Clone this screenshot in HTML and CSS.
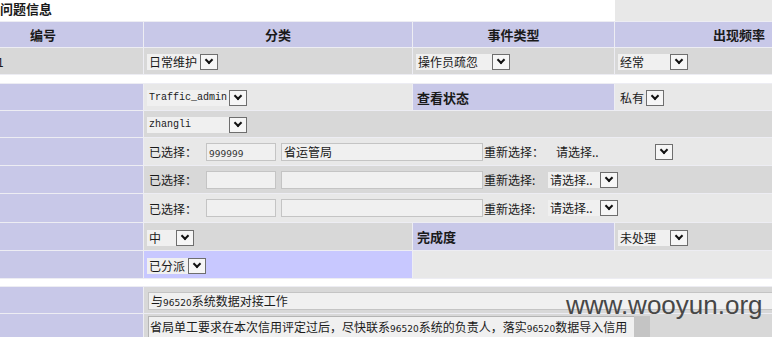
FILE: index.html
```html
<!DOCTYPE html>
<html lang="zh-CN">
<head>
    <meta charset="UTF-8">
    <title>问题信息</title>
    <link rel="stylesheet" href="styles.css">
</head>
<body>
<div class="page">
    <div class="title-bar">
        <div class="title">问题信息</div>
        <div class="title-side"></div>
    </div>

    <table class="grid">
        <colgroup><col class="c1"><col class="c2"><col class="c3"><col class="c4"></colgroup>
        <tr class="h25">
            <th class="lav">编号</th>
            <th class="lav">分类</th>
            <th class="lav">事件类型</th>
            <th class="lav">出现频率</th>
        </tr>
        <tr class="h26">
            <td class="g1 id">1</td>
            <td class="g1"><span class="sel"><span class="val w53">日常维护</span><span class="btn"></span></span></td>
            <td class="g1"><span class="sel"><span class="val w76">操作员疏忽</span><span class="btn"></span></span></td>
            <td class="g1"><span class="sel"><span class="val w52">经常</span><span class="btn"></span></span></td>
        </tr>
    </table>

    <table class="grid second">
        <colgroup><col class="c1"><col class="c2"><col class="c3"><col class="c4"></colgroup>
        <tr class="h26">
            <td class="lav"></td>
            <td class="g2"><span class="sel"><span class="val mono w82">Traffic_admin</span><span class="btn"></span></span></td>
            <td class="lav strong">查看状态</td>
            <td class="g2"><span class="sel"><span class="val w28 flat">私有</span><span class="btn"></span></span></td>
        </tr>
        <tr class="h26">
            <td class="lav"></td>
            <td class="g1" colspan="3"><span class="sel"><span class="val mono w82">zhangli</span><span class="btn"></span></span></td>
        </tr>
        <tr class="h27">
            <td class="lav"></td>
            <td class="g2" colspan="3">
                <div class="pick">
                    <span class="lbl">已选择：</span>
                    <span class="field code"><span class="small">999999</span></span>
                    <span class="field name">省运管局</span>
                    <span class="lbl2 wide">重新选择：</span>
                    <span class="sel"><span class="val w101 flat">请选择..</span><span class="btn"></span></span>
                </div>
            </td>
        </tr>
        <tr class="h27">
            <td class="lav"></td>
            <td class="g1" colspan="3">
                <div class="pick">
                    <span class="lbl">已选择：</span>
                    <span class="field code"></span>
                    <span class="field name"></span>
                    <span class="lbl2">重新选择:</span>
                    <span class="sel"><span class="val w52">请选择..</span><span class="btn"></span></span>
                </div>
            </td>
        </tr>
        <tr class="h28">
            <td class="lav"></td>
            <td class="g2" colspan="3">
                <div class="pick">
                    <span class="lbl">已选择：</span>
                    <span class="field code"></span>
                    <span class="field name"></span>
                    <span class="lbl2">重新选择:</span>
                    <span class="sel"><span class="val w52">请选择..</span><span class="btn"></span></span>
                </div>
            </td>
        </tr>
        <tr class="h27">
            <td class="lav"></td>
            <td class="g1"><span class="sel"><span class="val w29">中</span><span class="btn"></span></span></td>
            <td class="lav strong">完成度</td>
            <td class="g1"><span class="sel"><span class="val w52">未处理</span><span class="btn"></span></span></td>
        </tr>
        <tr class="h27">
            <td class="lav"></td>
            <td class="hi"><span class="sel"><span class="val w41">已分派</span><span class="btn"></span></span></td>
            <td class="g2" colspan="2"></td>
        </tr>
    </table>

    <table class="grid third">
        <colgroup><col class="c1"><col class="c2"><col class="c3"><col class="c4"></colgroup>
        <tr class="h26">
            <td class="lav"></td>
            <td class="g1" colspan="3"><span class="field subject">与<span class="num">96520</span>系统数据对接工作</span></td>
        </tr>
        <tr class="h40">
            <td class="lav"></td>
            <td class="g1 top" colspan="3">
                <div class="memo">
                    <div class="memo-text">省局单工要求在本次信用评定过后，尽快联系<span class="num">96520</span>系统的负责人，落实<span class="num">96520</span>数据导入信用系统的工作。</div>
                    <div class="memo-bar"></div>
                </div>
            </td>
        </tr>
    </table>

    <div class="mark">www.wooyun.org</div>
</div>
</body>
</html>
```

FILE: styles.css
```css
body {
    margin: 0;
    font-family: "Noto Sans CJK SC", sans-serif;
    font-size: 12px;
    color: #1a1a1a;
    background-color: #fff;
}
.page {
    position: relative;
    width: 772px;
    height: 337px;
    overflow: hidden;
}
.title-bar {
    display: flex;
    height: 21px;
}
.title {
    flex: 1;
    font-size: 13px;
    font-weight: bold;
    line-height: 17px;
}
.title-side {
    width: 157px;
    background-color: #e8e8e8;
}

.grid {
    width: 922px;
    margin-left: -58px;
    table-layout: fixed;
    border-collapse: separate;
    border-spacing: 1px;
    background-color: #ededf3;
}
.second {
    margin-top: 8px;
}
.third {
    margin-top: 7px;
}
.c1 { width: 200px; }
.c2 { width: 268px; }
.c3 { width: 201px; }
.c4 { width: 248px; }

.grid th, .grid td {
    box-sizing: border-box;
    padding: 0 0 0 3px;
    white-space: nowrap;
    overflow: hidden;
    vertical-align: middle;
}
.grid th {
    padding: 0;
    font-size: 13px;
    text-align: center;
}
.h25 > * { height: 25px; }
.h26 > * { height: 26px; }
.h27 > * { height: 27px; }
.h28 > * { height: 28px; }
.h40 > * { height: 40px; }
.top {
    vertical-align: top !important;
    padding-top: 2px !important;
}

.lav { background-color: #c8c8e8; }
.g1 { background-color: #d8d8d8; }
.g2 { background-color: #e8e8e8; }
.hi { background-color: #c8c8ff; }
.strong {
    padding-left: 4px !important;
    font-size: 13px;
    font-weight: bold;
}
.id {
    padding-left: 54px !important;
}

/* dropdowns */
.sel {
    display: inline-flex;
    align-items: center;
    height: 17px;
    vertical-align: middle;
}
.val {
    box-sizing: border-box;
    height: 16px;
    padding-left: 2px;
    line-height: 16px;
    background-color: #f0f0f0;
    overflow: hidden;
}
.val.flat {
    background-color: transparent;
}
.mono {
    font-family: "Liberation Mono", monospace;
    font-size: 10px;
}
.w28 { width: 28px; }
.w29 { width: 29px; }
.w41 { width: 41px; }
.w52 { width: 52px; }
.w53 { width: 53px; }
.w76 { width: 76px; }
.w82 { width: 82px; }
.w101 { width: 101px; }
.btn {
    box-sizing: border-box;
    width: 18px;
    height: 16px;
    border: 1px solid #6e6e6e;
    background-color: #f6f6f6;
    position: relative;
}
.btn::after {
    content: "";
    position: absolute;
    left: 5px;
    top: 2px;
    width: 4px;
    height: 4px;
    border-right: 2px solid #111;
    border-bottom: 2px solid #111;
    transform: rotate(45deg);
}

/* text fields */
.pick {
    display: flex;
    align-items: center;
}
.lbl {
    width: 57px;
    padding-left: 2px;
}
.lbl2 {
    width: 64px;
    padding-left: 1px;
}
.lbl2.wide {
    width: 70px;
}
.field {
    box-sizing: border-box;
    display: inline-block;
    height: 18px;
    padding-left: 2px;
    line-height: 16px;
    border: 1px solid #c4c4c4;
    background-color: #f0f0f0;
    vertical-align: middle;
}
.code {
    width: 70px;
}
.name {
    width: 202px;
    margin-left: 5px;
}
.small {
    font-family: "DejaVu Sans", sans-serif;
    font-size: 9px;
    color: #333;
}
.subject {
    width: 700px;
    margin-left: 1px;
}
.num {
    font-family: "DejaVu Sans", sans-serif;
    font-size: 9px;
}

.memo {
    display: flex;
    margin-left: 1px;
    height: 40px;
}
.memo-text {
    box-sizing: border-box;
    width: 486px;
    padding: 1px 0 0 1px;
    border: 1px solid #b4b4b4;
    border-right: none;
    background-color: #f0f0f0;
    white-space: normal;
    line-height: 17px;
    overflow: hidden;
}
.memo-bar {
    width: 16px;
    background-color: #c4c4c4;
}

.mark {
    position: absolute;
    left: 566px;
    top: 290px;
    font-family: "Liberation Sans", Arial, sans-serif;
    font-size: 26px;
    line-height: 30px;
    color: #474747;
}
```
